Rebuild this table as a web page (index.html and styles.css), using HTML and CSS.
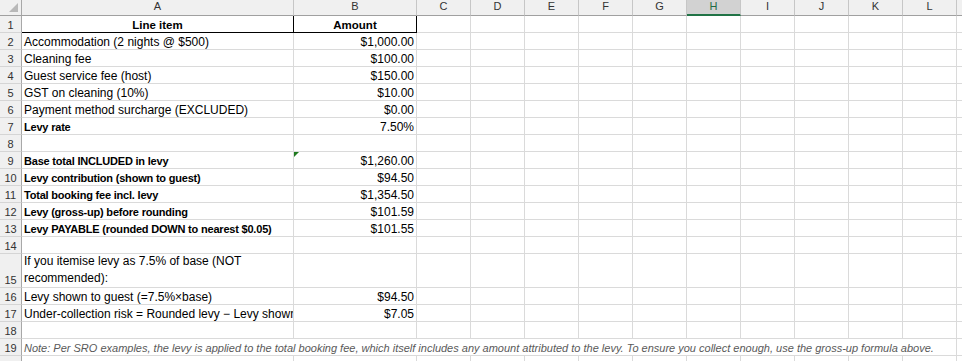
FILE: index.html
```html
<!DOCTYPE html>
<html lang="en">
<head>
<meta charset="utf-8">
<title>Levy worksheet</title>
<link rel="stylesheet" href="styles.css">
</head>
<body>
<div class="sheet">
  <div class="colhead">
    <div class="corner"><svg width="21" height="15" viewBox="0 0 21 15"><polygon points="18,3 18,12 9,12" fill="#b8b8b8"/></svg></div>
    <div class="ch">A</div>
    <div class="ch">B</div>
    <div class="ch">C</div>
    <div class="ch">D</div>
    <div class="ch">E</div>
    <div class="ch">F</div>
    <div class="ch">G</div>
    <div class="ch sel">H</div>
    <div class="ch">I</div>
    <div class="ch">J</div>
    <div class="ch">K</div>
    <div class="ch">L</div>
    <div class="ch end"></div>
  </div>

  <div class="row"><div class="rh">1</div><div class="cell th">Line item</div><div class="cell th">Amount</div><div class="rest"></div><div class="tail"></div></div>
  <div class="row"><div class="rh">2</div><div class="cell">Accommodation (2 nights @ $500)</div><div class="cell num">$1,000.00</div><div class="rest"></div><div class="tail"></div></div>
  <div class="row"><div class="rh">3</div><div class="cell">Cleaning fee</div><div class="cell num">$100.00</div><div class="rest"></div><div class="tail"></div></div>
  <div class="row"><div class="rh">4</div><div class="cell">Guest service fee (host)</div><div class="cell num">$150.00</div><div class="rest"></div><div class="tail"></div></div>
  <div class="row"><div class="rh">5</div><div class="cell">GST on cleaning (10%)</div><div class="cell num">$10.00</div><div class="rest"></div><div class="tail"></div></div>
  <div class="row"><div class="rh">6</div><div class="cell">Payment method surcharge (EXCLUDED)</div><div class="cell num">$0.00</div><div class="rest"></div><div class="tail"></div></div>
  <div class="row"><div class="rh">7</div><div class="cell bold">Levy rate</div><div class="cell num">7.50%</div><div class="rest"></div><div class="tail"></div></div>
  <div class="row"><div class="rh">8</div><div class="cell"></div><div class="cell"></div><div class="rest"></div><div class="tail"></div></div>
  <div class="row"><div class="rh">9</div><div class="cell bold">Base total INCLUDED in levy</div><div class="cell num flag">$1,260.00</div><div class="rest"></div><div class="tail"></div></div>
  <div class="row"><div class="rh">10</div><div class="cell bold">Levy contribution (shown to guest)</div><div class="cell num">$94.50</div><div class="rest"></div><div class="tail"></div></div>
  <div class="row"><div class="rh">11</div><div class="cell bold">Total booking fee incl. levy</div><div class="cell num">$1,354.50</div><div class="rest"></div><div class="tail"></div></div>
  <div class="row"><div class="rh">12</div><div class="cell bold">Levy (gross-up) before rounding</div><div class="cell num">$101.59</div><div class="rest"></div><div class="tail"></div></div>
  <div class="row"><div class="rh">13</div><div class="cell bold">Levy PAYABLE (rounded DOWN to nearest $0.05)</div><div class="cell num">$101.55</div><div class="rest"></div><div class="tail"></div></div>
  <div class="row"><div class="rh">14</div><div class="cell"></div><div class="cell"></div><div class="rest"></div><div class="tail"></div></div>
  <div class="row tall"><div class="rh">15</div><div class="cell wrap">If you itemise levy as 7.5% of base (NOT recommended):</div><div class="cell"></div><div class="rest"></div><div class="tail"></div></div>
  <div class="row"><div class="rh">16</div><div class="cell">Levy shown to guest (=7.5%×base)</div><div class="cell num">$94.50</div><div class="rest"></div><div class="tail"></div></div>
  <div class="row"><div class="rh">17</div><div class="cell">Under-collection risk = Rounded levy − Levy shown</div><div class="cell num">$7.05</div><div class="rest"></div><div class="tail"></div></div>
  <div class="row"><div class="rh">18</div><div class="cell"></div><div class="cell"></div><div class="rest"></div><div class="tail"></div></div>
  <div class="row"><div class="rh">19</div><div class="cell note">Note: Per SRO examples, the levy is applied to the total booking fee, which itself includes any amount attributed to the levy. To ensure you collect enough, use the gross-up formula above.</div><div class="tail"></div></div>
  <div class="row"><div class="rh"></div><div class="cell"></div><div class="cell"></div><div class="rest"></div><div class="tail"></div></div>
</div>
</body>
</html>
```

FILE: styles.css
```css
html, body {
  margin: 0;
  padding: 0;
  background: #ffffff;
  overflow: hidden;
}

.sheet {
  font-family: "Liberation Sans", Arial, sans-serif;
  color: #000000;
  width: 962px;
}

.colhead {
  display: grid;
  grid-template-columns: 22px 272px 123px repeat(10, 54px) 1fr;
  height: 16px;
  background: #f0f0f0;
}

.corner {
  box-sizing: border-box;
  border-right: 1px solid #a8a8a8;
  border-bottom: 1px solid #a0a0a0;
  height: 16px;
  line-height: 0;
}

.ch {
  box-sizing: border-box;
  height: 16px;
  border-right: 1px solid #c6c6c6;
  border-bottom: 1px solid #a0a0a0;
  font-size: 11px;
  line-height: 13px;
  text-align: center;
  color: #333333;
}

.ch.sel {
  background: #d2d2d2;
  border-bottom: 2px solid #217346;
  color: #1f6b43;
}

.ch.end {
  border-right: none;
}

.row {
  display: grid;
  grid-template-columns: 22px 272px 123px 540px 1fr;
  height: 17px;
}

.row.tall {
  height: 34px;
}

.rh {
  box-sizing: border-box;
  background: #f0f0f0;
  border-right: 1px solid #a8a8a8;
  border-bottom: 1px solid #d5d5d5;
  font-size: 11px;
  line-height: 14px;
  color: #333333;
  display: flex;
  align-items: flex-end;
  justify-content: center;
}

.cell {
  box-sizing: border-box;
  border-right: 1px solid #dadada;
  border-bottom: 1px solid #dadada;
  padding: 0 2px;
  font-size: 12px;
  line-height: 14px;
  white-space: nowrap;
  overflow: hidden;
  display: flex;
  align-items: flex-end;
  min-width: 0;
}

.cell.num {
  justify-content: flex-end;
}

.cell.bold {
  font-weight: bold;
  font-size: 11px;
  letter-spacing: -0.2px;
}

.cell.th {
  font-weight: bold;
  font-size: 11.5px;
  justify-content: center;
  border-right-color: #000000;
  border-bottom-color: #000000;
}

.cell.wrap {
  white-space: normal;
  line-height: 17px;
}

.cell.flag {
  position: relative;
}

.cell.flag::before {
  content: "";
  position: absolute;
  top: 0;
  left: 0;
  border-top: 5px solid #1f7a1f;
  border-right: 5px solid transparent;
}

.cell.note {
  grid-column: 2 / 5;
  font-style: italic;
  color: #595959;
  font-size: 11px;
}

.rest {
  box-sizing: border-box;
  border-bottom: 1px solid #dadada;
  background: repeating-linear-gradient(to right, transparent 0 53px, #dadada 53px 54px);
}

.tail {
  box-sizing: border-box;
  border-bottom: 1px solid #dadada;
}
```
